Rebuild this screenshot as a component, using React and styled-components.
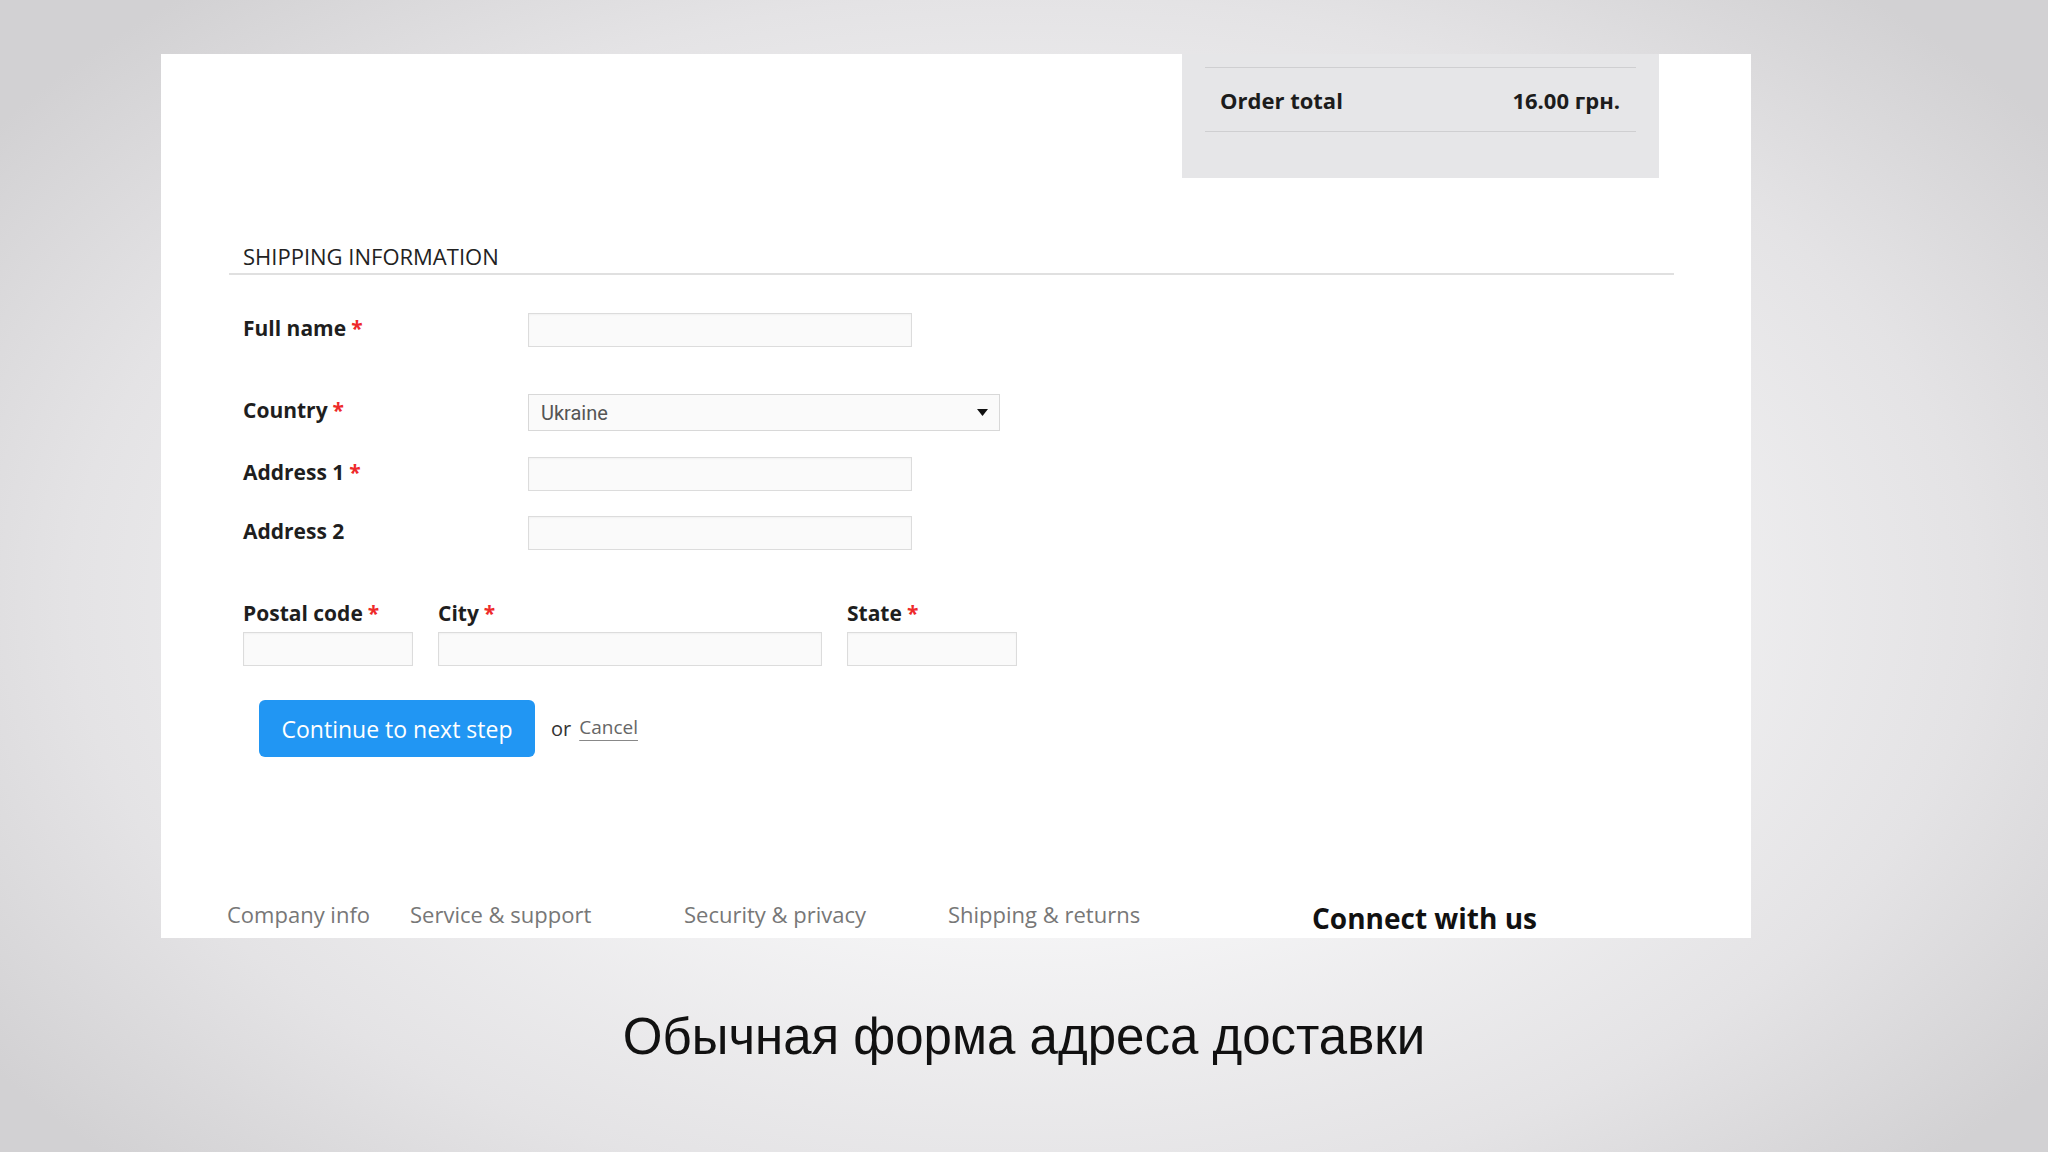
import React from 'react';
import styled, { createGlobalStyle } from 'styled-components';

const GlobalStyle = createGlobalStyle`
    html, body {
        margin: 0;
        padding: 0;
    }
    body {
        font-family: "Open Sans", "Liberation Sans", sans-serif;
        color: #222;
    }
    * {
        box-sizing: border-box;
    }
`

const Page = styled.div`
    width: 2048px;
    height: 1152px;
    overflow: hidden;
    display: flex;
    flex-direction: column;
    align-items: flex-start;
    padding: 54px 0 0 161px;
    background: radial-gradient(ellipse 62% 70% at 50% 52%, #ffffff 0%, #f7f7f8 35%, #e4e3e5 75%, #d2d1d3 100%);
`

const Panel = styled.div`
    width: 1590px;
    height: 884px;
    background-color: #fff;
    display: flex;
    flex-direction: column;
`

const TopBar = styled.div`
    display: flex;
    justify-content: flex-end;
    padding-right: 92px;
`

const OrderBox = styled.div`
    width: 477px;
    height: 124px;
    background-color: #e6e6e8;
    padding: 13px 23px 0;
`

const OrderRow = styled.div`
    height: 65px;
    border-top: 1px solid #cfcfd1;
    border-bottom: 1px solid #cfcfd1;
    display: flex;
    align-items: center;
    justify-content: space-between;
    padding: 0 16px 0 15px;
    font-size: 22px;
    font-weight: 700;
    color: #1c1c1c;
`

const Section = styled.div`
    margin: 63px 0 0 68px;
    width: 1445px;
`

const SectionTitle = styled.h2`
    margin: 0;
    padding: 0 0 2px 14px;
    font-size: 22px;
    line-height: 30px;
    font-weight: 400;
    color: #222;
    border-bottom: 2px solid #e0e0e0;
`

const FormBody = styled.div`
    padding-left: 14px;
`

const Row = styled.div`
    display: grid;
    grid-template-columns: 285px 1fr;
    align-items: center;
    margin-top: ${p => p.$top}px;
`

const Label = styled.label`
    font-size: 21px;
    line-height: 26px;
    font-weight: 700;
    color: #1e1e1e;
    white-space: nowrap;
`

const RowLabel = styled(Label)`
    margin-bottom: 5px;
`

const Req = styled.span`
    color: #ee2a2a;
    margin-left: 5px;
`

const Input = styled.input`
    display: block;
    width: ${p => p.$w}px;
    height: 34px;
    border: 1px solid #dcdcdc;
    background-color: #fafafa;
    box-shadow: inset 0 1px 2px rgba(0, 0, 0, 0.04);
    outline: none;
    font: inherit;
`

const SelectWrap = styled.div`
    position: relative;
    width: 472px;
    height: 37px;
`

const Select = styled.select`
    appearance: none;
    width: 100%;
    height: 100%;
    border: 1px solid #d8d8d8;
    background-color: #fafafa;
    padding: 0 0 0 12px;
    font-family: Roboto, "Liberation Sans", sans-serif;
    font-size: 20px;
    color: #555;
    outline: none;
`

const Arrow = styled.svg`
    position: absolute;
    right: 12px;
    top: 15px;
    pointer-events: none;
`

const Columns = styled.div`
    display: flex;
    gap: 25px;
    margin-top: 50px;
`

const Field = styled.div`
    display: flex;
    flex-direction: column;
    gap: 6px;
`

const Actions = styled.div`
    display: flex;
    align-items: center;
    margin: 34px 0 0 16px;
`

const PrimaryButton = styled.button`
    height: 57px;
    width: 276px;
    border: none;
    border-radius: 6px;
    background-color: #2196f3;
    color: #fff;
    font-family: "Open Sans", sans-serif;
    font-size: 23px;
    cursor: pointer;
`

const Or = styled.span`
    margin-left: 16px;
    font-size: 20px;
    color: #333;
`

const CancelLink = styled.a`
    margin: 0 0 4px 8px;
    font-size: 19px;
    color: #666;
    text-decoration: underline;
    text-underline-offset: 6px;
    text-decoration-color: #888;
`

const Footer = styled.div`
    margin-top: auto;
    padding: 0 0 3px 66px;
    display: grid;
    grid-template-columns: 183px 274px 264px 364px auto;
    align-items: end;
`

const FooterLink = styled.span`
    margin-bottom: 6px;
    font-size: 22px;
    line-height: 30px;
    color: #777;
`

const FooterTitle = styled.span`
    font-size: 28px;
    line-height: 34px;
    font-weight: 700;
    color: #111;
`

const Caption = styled.div`
    align-self: stretch;
    margin: 68px 161px 0 0;
    text-align: center;
    font-family: "Liberation Sans", Arial, sans-serif;
    font-size: 51px;
    line-height: 62px;
    color: #111;
`

const footerLinks = ['Company info', 'Service & support', 'Security & privacy', 'Shipping & returns'];

const App = () => (
    <Page>
        <GlobalStyle />
        <Panel>
            <TopBar>
                <OrderBox>
                    <OrderRow>
                        <span>Order total</span>
                        <span>16.00 грн.</span>
                    </OrderRow>
                </OrderBox>
            </TopBar>
            <Section>
                <SectionTitle>SHIPPING INFORMATION</SectionTitle>
                <FormBody>
                    <Row $top={38}>
                        <RowLabel>Full name<Req>*</Req></RowLabel>
                        <Input $w={384} />
                    </Row>
                    <Row $top={47}>
                        <RowLabel>Country<Req>*</Req></RowLabel>
                        <SelectWrap>
                            <Select defaultValue="Ukraine">
                                <option>Ukraine</option>
                            </Select>
                            <Arrow width="11" height="7" viewBox="0 0 11 7">
                                <path d="M0 0 H11 L5.5 7 Z" fill="#111" />
                            </Arrow>
                        </SelectWrap>
                    </Row>
                    <Row $top={26}>
                        <RowLabel>Address 1<Req>*</Req></RowLabel>
                        <Input $w={384} />
                    </Row>
                    <Row $top={25}>
                        <RowLabel>Address 2</RowLabel>
                        <Input $w={384} />
                    </Row>
                    <Columns>
                        <Field>
                            <Label>Postal code<Req>*</Req></Label>
                            <Input $w={170} />
                        </Field>
                        <Field>
                            <Label>City<Req>*</Req></Label>
                            <Input $w={384} />
                        </Field>
                        <Field>
                            <Label>State<Req>*</Req></Label>
                            <Input $w={170} />
                        </Field>
                    </Columns>
                    <Actions>
                        <PrimaryButton>Continue to next step</PrimaryButton>
                        <Or>or</Or>
                        <CancelLink href="#">Cancel</CancelLink>
                    </Actions>
                </FormBody>
            </Section>
            <Footer>
                {footerLinks.map(link => (
                    <FooterLink key={link}>{link}</FooterLink>
                ))}
                <FooterTitle>Connect with us</FooterTitle>
            </Footer>
        </Panel>
        <Caption>Обычная форма адреса доставки</Caption>
    </Page>
);

export default App;
